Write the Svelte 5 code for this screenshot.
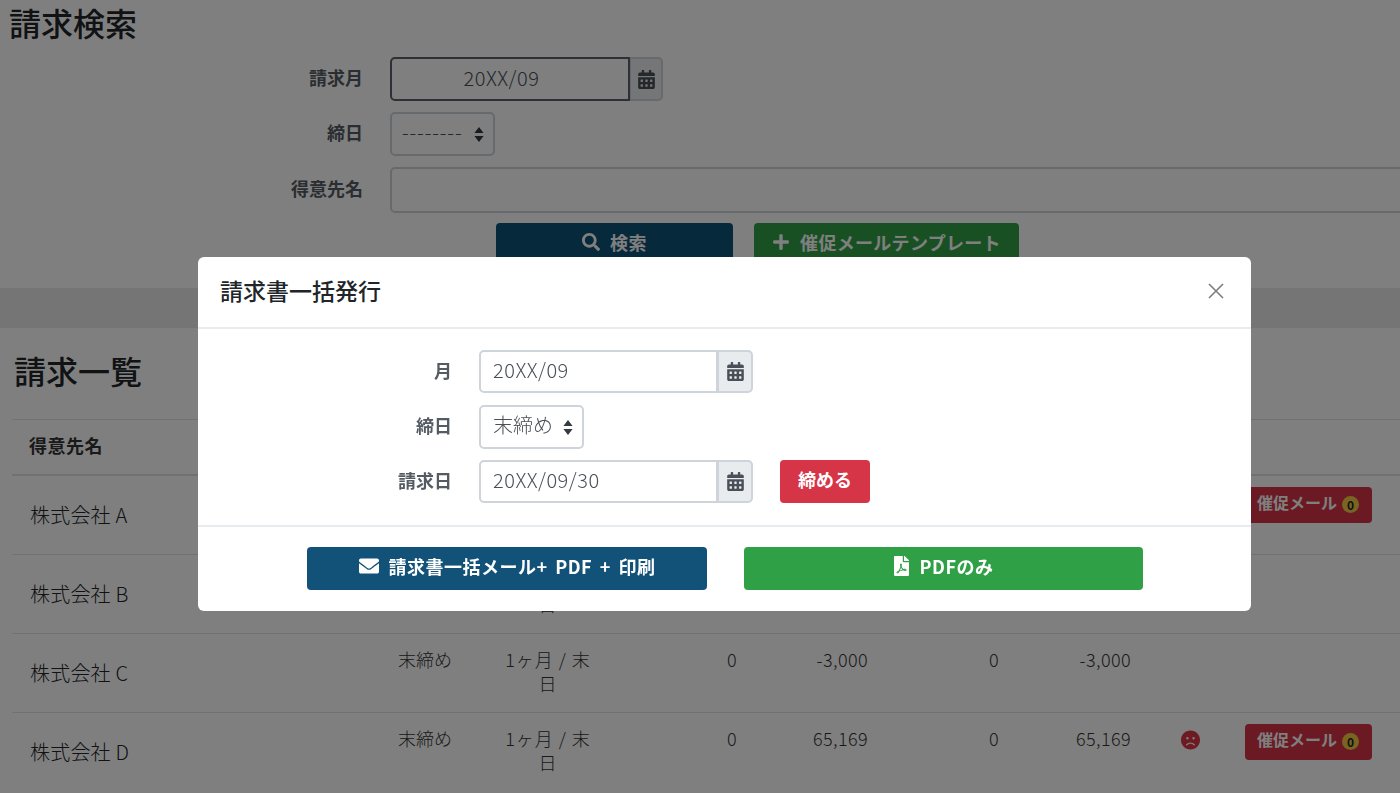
<script lang="ts">
  interface Row {
    name: string;
    closing: string;
    cycle: string;
    nums: string[];
    frown?: boolean;
    mail?: boolean;
  }

  const rows: Row[] = [
    { name: '株式会社 A', closing: '', cycle: '', nums: ['', '', '', ''], mail: true },
    { name: '株式会社 B', closing: '', cycle: '1ヶ月 / 末日', nums: ['', '', '', ''] },
    { name: '株式会社 C', closing: '末締め', cycle: '1ヶ月 / 末日', nums: ['0', '-3,000', '0', '-3,000'] },
    { name: '株式会社 D', closing: '末締め', cycle: '1ヶ月 / 末日', nums: ['0', '65,169', '0', '65,169'], frown: true, mail: true },
  ];

  const calendar = 'M0 464c0 26.5 21.5 48 48 48h352c26.5 0 48-21.5 48-48V192H0v272zm320-196c0-6.6 5.4-12 12-12h40c6.6 0 12 5.4 12 12v40c0 6.6-5.4 12-12 12h-40c-6.6 0-12-5.4-12-12v-40zm0 128c0-6.6 5.4-12 12-12h40c6.6 0 12 5.4 12 12v40c0 6.6-5.4 12-12 12h-40c-6.6 0-12-5.4-12-12v-40zM192 268c0-6.6 5.4-12 12-12h40c6.6 0 12 5.4 12 12v40c0 6.6-5.4 12-12 12h-40c-6.6 0-12-5.4-12-12v-40zm0 128c0-6.6 5.4-12 12-12h40c6.6 0 12 5.4 12 12v40c0 6.6-5.4 12-12 12h-40c-6.6 0-12-5.4-12-12v-40zM64 268c0-6.6 5.4-12 12-12h40c6.6 0 12 5.4 12 12v40c0 6.6-5.4 12-12 12H76c-6.6 0-12-5.4-12-12v-40zm0 128c0-6.6 5.4-12 12-12h40c6.6 0 12 5.4 12 12v40c0 6.6-5.4 12-12 12H76c-6.6 0-12-5.4-12-12v-40zM400 64h-48V16c0-8.8-7.2-16-16-16h-32c-8.8 0-16 7.2-16 16v48H160V16c0-8.8-7.2-16-16-16h-32c-8.8 0-16 7.2-16 16v48H48C21.5 64 0 85.5 0 112v48h448v-48c0-26.5-21.5-48-48-48z';
  const search = 'M505 442.7L405.3 343c-4.5-4.5-10.6-7-17-7H372c27.6-35.3 44-79.7 44-128C416 93.1 322.9 0 208 0S0 93.1 0 208s93.1 208 208 208c48.3 0 92.7-16.4 128-44v16.3c0 6.4 2.5 12.5 7 17l99.7 99.7c9.4 9.4 24.6 9.4 33.9 0l28.3-28.3c9.4-9.4 9.4-24.6.1-34zM208 336c-70.7 0-128-57.2-128-128 0-70.7 57.2-128 128-128 70.7 0 128 57.2 128 128 0 70.7-57.2 128-128 128z';
  const plus = 'M416 208H272V64c0-17.67-14.33-32-32-32h-32c-17.67 0-32 14.33-32 32v144H32c-17.67 0-32 14.33-32 32v32c0 17.67 14.33 32 32 32h144v144c0 17.67 14.33 32 32 32h32c17.67 0 32-14.33 32-32V304h144c17.67 0 32-14.33 32-32v-32c0-17.67-14.33-32-32-32z';
  const envelope = 'M502.3 190.8c3.9-3.1 9.7-.2 9.7 4.7V400c0 26.5-21.5 48-48 48H48c-26.5 0-48-21.5-48-48V195.6c0-5 5.7-7.8 9.7-4.7 22.4 17.4 52.1 39.5 154.1 113.6 21.1 15.4 56.7 47.8 92.2 47.6 35.7.3 72-32.8 92.3-47.6 102-74.1 131.6-96.3 154-113.7zM256 320c23.2.4 56.6-29.2 73.4-41.4 132.7-96.3 142.8-104.7 173.4-128.7 5.8-4.5 9.2-11.5 9.2-18.9v-19c0-26.5-21.5-48-48-48H48C21.5 64 0 85.5 0 112v19c0 7.4 3.4 14.3 9.2 18.9 30.6 23.9 40.7 32.4 173.4 128.7 16.8 12.2 50.2 41.8 73.4 41.4z';
  const filePdf = 'M181.9 256.1c-5-16-4.9-46.9-2-46.9 8.4 0 7.6 36.9 2 46.9zm-1.7 47.2c-7.7 20.2-17.3 43.3-28.4 62.7 18.3-7 39-17.2 62.9-21.9-12.7-9.6-24.9-23.4-34.5-40.8zM86.1 428.1c0 .8 13.2-5.4 34.9-40.2-6.7 6.3-29.1 24.5-34.9 40.2zM248 160h136v328c0 13.3-10.7 24-24 24H24c-13.3 0-24-10.7-24-24V24C0 10.7 10.7 0 24 0h200v136c0 13.2 10.8 24 24 24zm-8 171.8c-20-12.2-33.3-29-42.7-53.8 4.5-18.5 11.6-46.6 6.2-64.2-4.7-29.4-42.4-26.5-47.8-6.8-5 18.3-.4 44.1 8.1 77-11.6 27.6-28.7 64.6-40.8 85.8-.1 0-.1.1-.2.1-27.1 13.9-73.6 44.5-54.5 68 5.6 6.9 16 10 21.5 10 17.9 0 35.7-18 61.1-61.8 25.8-8.5 54.1-19.1 79-23.2 21.7 11.8 47.1 19.5 64 19.5 29.2 0 31.2-32 19.7-43.4-13.9-13.6-54.3-9.7-73.6-7.2zM377 105L279 7c-4.5-4.5-10.6-7-17-7h-6v128h128v-6.1c0-6.3-2.5-12.4-7-16.9zm-74.1 255.3c4.1-2.7-2.5-11.9-42.8-9 37.1 15.8 42.8 9 42.8 9z';
  const frown = 'M248 8C111 8 0 119 0 256s111 248 248 248 248-111 248-248S385 8 248 8zm80 168c17.7 0 32 14.3 32 32s-14.3 32-32 32-32-14.3-32-32 14.3-32 32-32zm-160 0c17.7 0 32 14.3 32 32s-14.3 32-32 32-32-14.3-32-32 14.3-32 32-32zm170.2 218.2C315.8 367.4 282.9 352 248 352s-67.8 15.4-90.2 42.2c-13.5 16.3-38.1-4.2-24.6-20.5C161.7 339.6 203.6 320 248 320s86.3 19.6 114.7 53.8c13.6 16.2-11 36.7-24.5 20.4z';
</script>

{#snippet calendarAddon()}
  <span class="addon">
    <svg class="cal" viewBox="0 0 448 512"><path d={calendar} /></svg>
  </span>
{/snippet}

<div class="page">
  <section class="search">
    <h2 class="search-title">請求検索</h2>
    <div class="search-form">
      <label for="s-month">請求月</label>
      <div class="group">
        <input id="s-month" class="field focused" value="20XX/09" />
        {@render calendarAddon()}
      </div>
      <label for="s-close">締日</label>
      <select id="s-close" class="field sel dashes"><option>--------</option></select>
      <label for="s-name">得意先名</label>
      <input id="s-name" class="field wide" />
    </div>
    <div class="search-actions">
      <button class="btn navy search-btn">
        <svg class="ico" viewBox="0 0 512 512"><path d={search} /></svg>検索
      </button>
      <button class="btn green tmpl-btn">
        <svg class="ico" viewBox="0 0 448 512"><path d={plus} /></svg>催促メールテンプレート
      </button>
    </div>
  </section>

  <div class="band"></div>

  <section class="list">
    <h2 class="list-title">請求一覧</h2>
    <table>
      <colgroup>
        <col style="width: 364px" />
        <col style="width: 100px" />
        <col style="width: 144px" />
        <col style="width: 129px" />
        <col style="width: 131px" />
        <col style="width: 131px" />
        <col style="width: 132px" />
        <col style="width: 94px" />
        <col style="width: 163px" />
      </colgroup>
      <thead>
        <tr>
          <th>得意先名</th>
          <th colspan="8"></th>
        </tr>
      </thead>
      <tbody>
        {#each rows as row}
          <tr>
            <td class="name">{row.name}</td>
            <td class="closing">{row.closing}</td>
            <td class="cycle">{row.cycle}</td>
            {#each row.nums as n}
              <td class="num">{n}</td>
            {/each}
            <td>
              {#if row.frown}
                <svg class="frown" viewBox="0 0 496 512"><path d={frown} /></svg>
              {/if}
            </td>
            <td class="action">
              {#if row.mail}
                <button class="mail-btn">催促メール<span class="badge">0</span></button>
              {/if}
            </td>
          </tr>
        {/each}
      </tbody>
    </table>
  </section>
</div>

<div class="backdrop"></div>

<div class="modal" role="dialog">
  <header class="modal-head">
    <h5>請求書一括発行</h5>
    <button class="close" aria-label="Close">
      <svg viewBox="0 0 16 16"><path d="M1 1l14 14M15 1L1 15" /></svg>
    </button>
  </header>
  <div class="modal-body">
    <label for="m-month">月</label>
    <div class="group">
      <input id="m-month" class="field" value="20XX/09" />
      {@render calendarAddon()}
    </div>
    <span></span>
    <label for="m-close">締日</label>
    <select id="m-close" class="field sel"><option>末締め</option></select>
    <span></span>
    <label for="m-date">請求日</label>
    <div class="group">
      <input id="m-date" class="field" value="20XX/09/30" />
      {@render calendarAddon()}
    </div>
    <button class="btn red close-btn">締める</button>
  </div>
  <footer class="modal-foot">
    <button class="btn blue foot-btn">
      <svg class="ico env" viewBox="0 0 512 512"><path d={envelope} /></svg>請求書一括メール+ PDF + 印刷
    </button>
    <button class="btn pdf foot-btn">
      <svg class="ico doc" viewBox="0 0 384 512"><path d={filePdf} /></svg>PDFのみ
    </button>
  </footer>
</div>

<style>
  :global(body) {
    margin: 0;
    background: #fff;
    color: #212529;
    font-family: "Noto Sans CJK JP", "Noto Sans", sans-serif;
    font-size: 18px;
    line-height: 24px;
    overflow: hidden;
  }

  .page {
    height: 793px;
    overflow: hidden;
  }

  h2 {
    margin: 0;
    font-size: 32px;
    line-height: 40px;
    font-weight: 500;
  }

  label {
    font-weight: 700;
    color: #545b62;
    text-align: right;
    padding-bottom: 5px;
  }

  .search {
    height: 288px;
    box-sizing: border-box;
    padding-top: 2px;
    overflow: hidden;
  }

  .search-title {
    padding-left: 9px;
    height: 55px;
  }

  .search-form {
    display: grid;
    grid-template-columns: 363px 1100px;
    column-gap: 27px;
    row-gap: 11px;
    align-items: center;
    justify-items: start;
  }

  .search-form label {
    justify-self: end;
  }

  .group {
    display: flex;
    height: 43px;
    width: 274px;
    align-self: start;
  }

  .group .field {
    flex: 1;
    min-width: 0;
    border-radius: 5px 0 0 5px;
    height: 100%;
  }

  .field {
    box-sizing: border-box;
    height: 44px;
    border: 2px solid #ced4da;
    border-radius: 5px;
    padding: 0 12px 4px;
    background-color: #fff;
    color: #495057;
    font: inherit;
    font-size: 20px;
    font-weight: 300;
    letter-spacing: 0.5px;
    outline: none;
  }

  .focused {
    border-color: #5b6168;
    text-align: center;
    padding-right: 29px;
  }

  .search-form .group {
    width: 273px;
    height: 44px;
  }

  .search-form .addon {
    width: 33px;
  }

  .addon {
    box-sizing: border-box;
    width: 35px;
    display: flex;
    align-items: center;
    justify-content: center;
    background: #e9ecef;
    border: 2px solid #ced4da;
    border-left-width: 1px;
    border-radius: 0 5px 5px 0;
  }

  .cal {
    width: 17px;
    height: 19px;
    fill: #495057;
  }

  .sel {
    appearance: none;
    width: 105px;
    padding-right: 28px;
    letter-spacing: 0;
    background-image: url("data:image/svg+xml,%3csvg xmlns='http://www.w3.org/2000/svg' width='10' height='17' viewBox='0 0 10 17'%3e%3cpath fill='%23343a40' d='M5 1l4.6 6H.4zM5 16L.4 10h9.2z'/%3e%3c/svg%3e");
    background-repeat: no-repeat;
    background-position: right 9px center;
    background-size: 10px 17px;
  }

  .dashes {
    padding-left: 10px;
    letter-spacing: 0.9px;
  }

  .wide {
    width: 1100px;
    height: 46px;
  }

  .search-actions {
    display: flex;
    gap: 21px;
    padding: 10px 0 0 496px;
  }

  .btn {
    display: inline-flex;
    align-items: center;
    justify-content: center;
    box-sizing: border-box;
    height: 43px;
    padding: 0 0 5px;
    border: none;
    border-radius: 4px;
    color: #fff;
    font: inherit;
    font-weight: 700;
  }

  .ico {
    width: 18px;
    height: 18px;
    fill: currentColor;
    margin-right: 10px;
  }

  .ico.env {
    width: 20px;
    height: 20px;
  }

  .ico.doc {
    width: 15px;
    height: 20px;
    margin-right: 11px;
  }

  .navy { background: #0f5278; }
  .green { background: #30a046; }
  .search-btn { width: 237px; letter-spacing: 0.5px; }
  .tmpl-btn { width: 265px; letter-spacing: 0.3px; }

  .band {
    height: 40px;
    background: #eaeaea;
  }

  .list {
    padding-top: 22px;
  }

  .list-title {
    padding-left: 14px;
    height: 69px;
  }

  table {
    margin-left: 12px;
    width: 1388px;
    table-layout: fixed;
    border-collapse: collapse;
  }

  th, td {
    padding: 13px 0 17px;
    border-top: 1px solid #dee2e6;
    vertical-align: top;
    font-weight: 300;
    color: #333;
  }

  td {
    height: 48px;
  }

  th {
    text-align: left;
    font-weight: 700;
    padding: 13px 0 17px 17px;
    letter-spacing: 0.5px;
    border-bottom: 2px solid #dee2e6;
  }

  td.name {
    padding: 15px 0 15px 18px;
    font-size: 20px;
    letter-spacing: 0.2px;
    vertical-align: middle;
    color: #212529;
  }

  .closing {
    text-align: center;
    padding-left: 12px;
    padding-right: 14px;
  }

  .cycle {
    text-align: center;
    padding-left: 24px;
    padding-right: 24px;
    letter-spacing: 1px;
  }

  .num {
    text-align: right;
    padding-right: 12px;
    letter-spacing: 0.4px;
  }

  .frown {
    display: block;
    width: 19px;
    height: 20px;
    margin: 4px auto 0;
    fill: #dc3545;
  }

  td.action {
    padding: 11px 0 0 8px;
  }

  .mail-btn {
    display: inline-flex;
    align-items: center;
    box-sizing: border-box;
    width: 127px;
    height: 36px;
    padding: 0 0 7px 12px;
    border: none;
    border-radius: 4px;
    background: #d63447;
    color: #fff;
    font: inherit;
    font-size: 16px;
    font-weight: 700;
  }

  .badge {
    display: inline-flex;
    align-items: center;
    justify-content: center;
    width: 17px;
    height: 17px;
    margin: 6px 0 0 5px;
    border-radius: 50%;
    background: #f5c842;
    color: #212529;
    font-size: 12px;
    line-height: 1;
  }

  .backdrop {
    position: fixed;
    inset: 0;
    background: rgba(0, 0, 0, 0.5);
  }

  .modal {
    position: fixed;
    left: 198px;
    top: 257px;
    width: 1053px;
    height: 354px;
    display: flex;
    flex-direction: column;
    background: #fff;
    border-radius: 6px;
  }

  .modal-head {
    height: 72px;
    box-sizing: border-box;
    display: flex;
    align-items: center;
    justify-content: space-between;
    padding: 0 26px 4px 22px;
    border-bottom: 2px solid #e9ecef;
  }

  h5 {
    margin: 0;
    font-size: 23px;
    font-weight: 500;
    line-height: 32px;
  }

  .close {
    width: 18px;
    height: 18px;
    margin-top: 2px;
    padding: 0;
    border: none;
    background: none;
  }

  .close svg {
    display: block;
    width: 16px;
    height: 16px;
    margin: 1px;
    fill: none;
    stroke: #7d7d7d;
    stroke-width: 1.6;
  }

  .modal-body {
    height: 198px;
    box-sizing: border-box;
    display: grid;
    grid-template-columns: 254px 274px 1fr;
    column-gap: 27px;
    row-gap: 11px;
    grid-auto-rows: 44px;
    padding-top: 21px;
    align-items: center;
    justify-items: start;
    border-bottom: 2px solid #e9ecef;
  }

  .modal-body label {
    justify-self: end;
  }

  .close-btn {
    width: 90px;
    align-self: start;
  }

  .red { background: #d63447; }

  .modal-foot {
    flex: 1;
    display: flex;
    gap: 37px;
    padding: 20px 0 0 109px;
  }

  .foot-btn {
    width: 400px;
    letter-spacing: 0.5px;
    word-spacing: 3px;
  }

  .blue { background: #125178; }
  .pdf { background: #30a046; width: 399px; }
</style>
